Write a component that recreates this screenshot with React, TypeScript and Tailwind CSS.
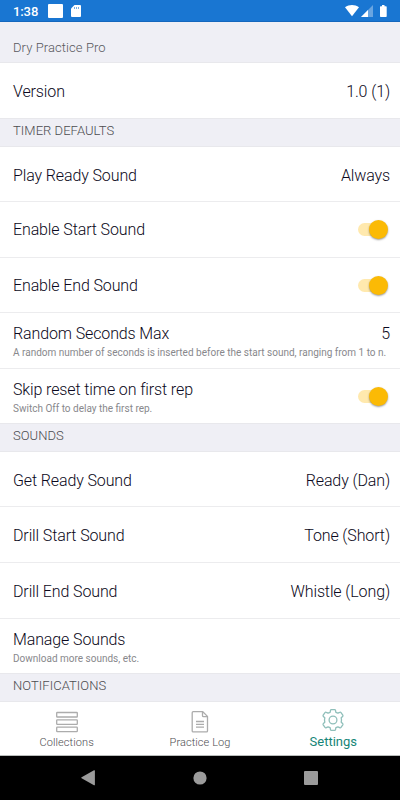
import type { ReactNode } from 'react'

type RowProps = {
  label: string
  value?: string
  note?: string
  on?: boolean
  className?: string
}

function Toggle() {
  return (
    <div className="relative mr-[2px] h-[19px] w-[30px]">
      <div className="absolute left-0 top-[3px] h-[13px] w-[27px] rounded-full bg-[#ffe9ae]" />
      <div className="absolute right-0 top-0 size-[19px] rounded-full bg-[#fbba05] shadow-[0_1px_2px_rgba(0,0,0,0.4)]" />
    </div>
  )
}

function Row({ label, value, note, on, className = 'h-[55px] border-b pt-[3px]' }: RowProps) {
  return (
    <div className={`flex shrink-0 flex-col justify-center border-[#ececee] pl-[13px] pr-[10px] ${className}`}>
      <div className="relative flex h-[19px] items-center justify-between">
        <span>{label}</span>
        {value && <span>{value}</span>}
        {on && <div className={`absolute right-0 ${note ? 'top-[7px]' : 'top-0'}`}><Toggle /></div>}
      </div>
      {note && <p className="h-[17px] whitespace-nowrap pt-[3px] text-[10px] font-normal leading-[14px] tracking-normal text-[#88888c]">{note}</p>}
    </div>
  )
}

function Section({ children }: { children: ReactNode }) {
  return (
    <div className="h-[29px] shrink-0 border-y border-[#e8e8ec] bg-[#efeff5] pl-[13px] pt-[3px] text-[13px] leading-[18px] tracking-[0.05px] text-[#4c4c50]">
      {children}
    </div>
  )
}

function StatusBar() {
  return (
    <div className="flex h-[22px] shrink-0 items-center border-b border-[#1467bd] bg-[#1976d2] pl-[13px] pt-px text-white">
      <span className="w-[35px] text-[13px] font-medium leading-none tracking-[-0.1px]">1:38</span>
      <svg width="352" height="22" viewBox="48 0 352 22" fill="currentColor">
        <rect x="48" y="4" width="15" height="14" rx="1" />
        <path d="M74.5 5h5.5a1 1 0 0 1 1 1v10a1 1 0 0 1-1 1h-8a1 1 0 0 1-1-1V8.5z" />
        <path d="M74.5 7v2M76.5 7v2M78.5 7v2" stroke="#1976d2" strokeWidth=".6" />
        <path d="M345 7.2c4.2-3 9.8-3 14 0L352 16.2z" />
        <path d="M373 5v12h-12z" opacity=".35" />
        <path d="M368 10v7h-7z" />
        <path d="M382 5h2.5v1.2h1.5a.7.7 0 0 1 .7.7v9.4a.7.7 0 0 1-.7.7h-5.3a.7.7 0 0 1-.7-.7V6.9a.7.7 0 0 1 .7-.7H382z" />
      </svg>
    </div>
  )
}

function TabBar() {
  return (
    <div className="grid h-[54px] shrink-0 grid-cols-3 border-b border-[#b9bdbb] bg-white text-[11px] tracking-[0.08px] text-[#4c4c50]">
      <div className="flex flex-col items-center">
        <svg className="mt-[8px]" width="24" height="24" viewBox="0 0 24 24" fill="none" stroke="#acacac" strokeWidth="1.3">
          <rect x="1.7" y="2.5" width="20.6" height="4.5" rx=".6" />
          <rect x="1.7" y="9.8" width="20.6" height="4.5" rx=".6" />
          <rect x="1.7" y="17.1" width="20.6" height="4.5" rx=".6" />
        </svg>
        <span className="mt-[2px] leading-[13px]">Collections</span>
      </div>
      <div className="flex flex-col items-center">
        <svg className="mt-[8px]" width="24" height="24" viewBox="0 0 24 24" fill="none" stroke="#acacac" strokeWidth="1.3" strokeLinejoin="round">
          <path d="M5.200 1.700h9.600l4.700 4.700v14.500a1 1 0 0 1-1 1H5.200a1 1 0 0 1-1-1V2.700a1 1 0 0 1 1-1z" />
          <path d="M14.500 2v3.700a1 1 0 0 0 1 1h3.700M8 11.500h8M8 14.300h8M8 17.100h8" />
        </svg>
        <span className="mt-[2px] leading-[13px]">Practice Log</span>
      </div>
      <div className="flex flex-col items-center text-[#158577]">
        <svg className="mt-[6px]" width="24" height="24" viewBox="0 0 24 24" fill="none" stroke="#8fbfba" strokeWidth="1.3" strokeLinejoin="round">
          <path d="M10.400 1.700h3.200a.9.900 0 0 1 .9.700l.4 1.900 2 .9 1.800-.9a1 1 0 0 1 1.300.3l1.800 2.600a1 1 0 0 1-.2 1.300l-1.400 1.300.3 2.200-.3 2.200 1.400 1.300a1 1 0 0 1 .2 1.300L20 19.400a1 1 0 0 1-1.300.3l-1.800-.9-2 .9-.4 1.900a.9.900 0 0 1-.9.700h-3.200a.9.900 0 0 1-.9-.7l-.4-1.900-2-.9-1.800.9a1 1 0 0 1-1.300-.3l-1.800-2.600a1 1 0 0 1 .2-1.300l1.400-1.300-.3-2.200.3-2.200-1.400-1.300a1 1 0 0 1-.2-1.300L4 4.600a1 1 0 0 1 1.300-.3l1.800.9 2-.9.400-1.900a.9.900 0 0 1 .9-.7z" />
          <circle cx="12" cy="12" r="3.9" />
        </svg>
        <span className="mt-[2px] text-[13px] font-normal leading-[16px] tracking-normal">Settings</span>
      </div>
    </div>
  )
}

export default function App() {
  return (
    <div className="flex h-[800px] w-[400px] flex-col overflow-hidden bg-white font-[Roboto,sans-serif] text-[16px] font-light leading-[19px] tracking-[-0.12px] text-[#0b0820]">
      <StatusBar />
      <div className="h-[41px] shrink-0 border-b border-[#e8e8ec] bg-[#efeff5] pl-[13px] pt-[17px] text-[13px] leading-[18px] tracking-[0.08px] text-[#58585d]">
        Dry Practice Pro
      </div>
      <Row label="Version" value="1.0 (1)" className="h-[55px] pt-px" />

      <Section>TIMER DEFAULTS</Section>
      <Row label="Play Ready Sound" value="Always" />
      <Row label="Enable Start Sound" on className="h-[56px] border-b" />
      <Row label="Enable End Sound" on className="h-[55px] border-b pt-px" />
      <Row label="Random Seconds Max" value="5" note="A random number of seconds is inserted before the start sound, ranging from 1 to n." className="h-[56px] border-b pt-[3px]" />
      <Row label="Skip reset time on first rep" note="Switch Off to delay the first rep." on className="h-[54px] pt-[3px]" />

      <Section>SOUNDS</Section>
      <Row label="Get Ready Sound" value="Ready (Dan)" />
      <Row label="Drill Start Sound" value="Tone (Short)" className="h-[56px] border-b pt-px" />
      <Row label="Drill End Sound" value="Whistle (Long)" className="h-[56px] border-b pt-px" />
      <Row label="Manage Sounds" note="Download more sounds, etc." className="h-[54px] pt-[3px]" />

      <Section>NOTIFICATIONS</Section>
      <TabBar />

      <div className="flex h-[44px] shrink-0 bg-black">
        <svg width="400" height="44" viewBox="0 0 400 44" fill="#9b9b9b">
          <path d="M81.6 21.2 94 14.3a.6.6 0 0 1 .9.5v13.9a.6.6 0 0 1-.9.5L81.6 22.300a.6.6 0 0 1 0-1.100z" />
          <circle cx="200" cy="22" r="6.6" />
          <rect x="304" y="15" width="14" height="14" rx="1" />
        </svg>
      </div>
    </div>
  )
}
